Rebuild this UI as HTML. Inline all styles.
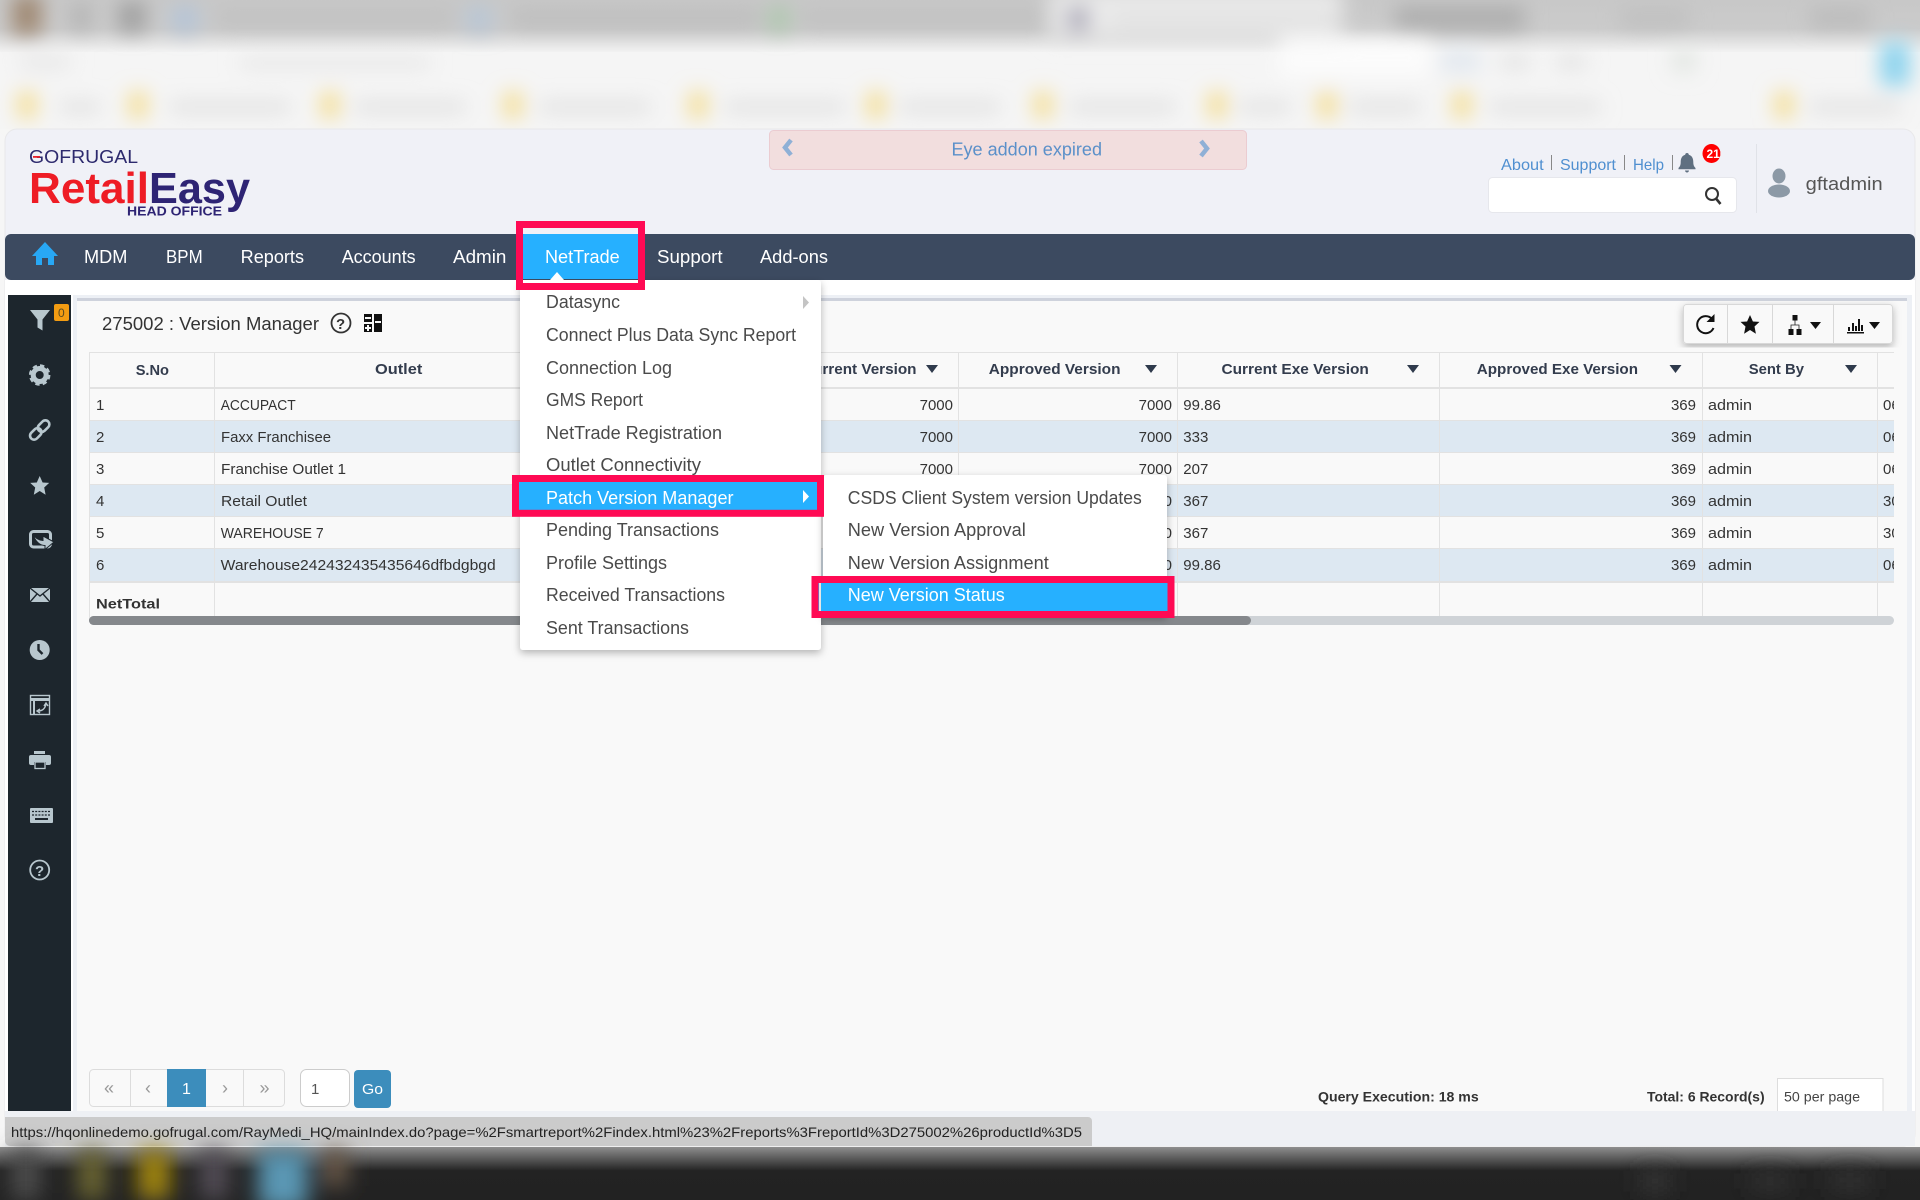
<!DOCTYPE html>
<html><head><meta charset="utf-8"><title>Version Manager</title>
<style>
html,body{margin:0;padding:0;background:#f6f6f6;width:1920px;height:1200px;overflow:hidden}
svg{display:block}
text{font-family:"Liberation Sans",sans-serif;white-space:pre}
.n{font-size:18px;fill:#fff}
.m{font-size:18px;fill:#4a4a4a}
.h{font-size:15px;font-weight:bold;fill:#333c4d}
.t{font-size:15px;fill:#333}
.i{fill:#b8c7ce}
.l{font-size:16px;fill:#4f8fd0}
.b{font-size:14px;font-weight:bold;fill:#333}
</style></head><body>
<svg xmlns="http://www.w3.org/2000/svg" width="1920" height="1200" viewBox="0 0 1920 1200">
<defs>
<filter id="bl" filterUnits="userSpaceOnUse" x="-40" y="-40" width="2000" height="200"><feGaussianBlur stdDeviation="10"/></filter>
<filter id="bs" filterUnits="userSpaceOnUse" x="-40" y="1120" width="2000" height="120"><feGaussianBlur stdDeviation="11"/></filter>
<filter id="sh" x="-10%" y="-10%" width="120%" height="120%"><feDropShadow dx="0" dy="3" stdDeviation="4" flood-color="#000" flood-opacity=".28"/></filter>
<linearGradient id="tb" x1="0" y1="0" x2="0" y2="1"><stop offset="0" stop-color="#8e8e8e"/><stop offset=".45" stop-color="#232323"/><stop offset="1" stop-color="#222"/></linearGradient>
<linearGradient id="tp" x1="0" y1="0" x2="0" y2="1"><stop offset="0" stop-color="#c8c8c8"/><stop offset=".55" stop-color="#cbcbcb"/><stop offset="1" stop-color="#f2f2f2"/></linearGradient>
<clipPath id="tc"><rect x="89" y="352" width="1805" height="273"/></clipPath>
<clipPath id="bd"><ellipse cx="1711.500" cy="153.500" rx="9" ry="9.500"/></clipPath>
</defs>

<!-- blurred browser chrome -->
<rect width="1920" height="129" fill="#f5f5f5"/>
<rect width="1920" height="52" fill="url(#tp)"/>
<g filter="url(#bl)">
<rect x="1050" y="-10" width="292" height="50" fill="#ebebeb"/>
<rect x="12" y="-5" width="30" height="40" fill="#a08a74"/>
<rect x="70" y="4" width="22" height="26" fill="#b4b4b4"/>
<rect x="118" y="2" width="28" height="30" fill="#a0a0a0"/>
<rect x="172" y="6" width="26" height="26" fill="#b4c4d8"/>
<rect x="215" y="10" width="240" height="16" fill="#bfbfbf"/>
<rect x="466" y="6" width="26" height="26" fill="#b8c6d6"/>
<rect x="510" y="10" width="250" height="16" fill="#bbb"/>
<rect x="768" y="6" width="22" height="26" fill="#aec8ae"/>
<rect x="800" y="10" width="250" height="16" fill="#bfbfbf"/>
<rect x="1066" y="6" width="24" height="26" fill="#b0aebc"/>
<rect x="1110" y="14" width="230" height="12" fill="#dedede"/>
<rect x="1395" y="6" width="130" height="24" fill="#adadad"/>
<rect x="1620" y="10" width="70" height="16" fill="#bebebe"/>
<rect x="1810" y="10" width="60" height="16" fill="#b8b8b8"/>
<rect x="20" y="54" width="50" height="16" fill="#e8e8e8"/>
<rect x="240" y="58" width="190" height="10" fill="#e4e4e4"/>
<rect x="1280" y="40" width="150" height="36" fill="#fcfcfc"/>
<rect x="1440" y="50" width="40" height="22" fill="#e2e8ef"/>
<rect x="1500" y="54" width="30" height="16" fill="#e4e4e4"/>
<rect x="1556" y="54" width="30" height="16" fill="#e4e4e4"/>
<rect x="1672" y="50" width="24" height="22" fill="#e2e6e2"/>
<rect x="1880" y="42" width="30" height="44" fill="#8fd4ee"/>
<g fill="#f4dd90">
<rect x="18" y="92" width="18" height="26"/><rect x="129" y="92" width="18" height="26"/><rect x="321" y="92" width="18" height="26"/><rect x="504" y="92" width="18" height="26"/><rect x="689" y="92" width="18" height="26"/><rect x="867" y="92" width="18" height="26"/><rect x="1034" y="92" width="18" height="26"/><rect x="1208" y="92" width="18" height="26"/><rect x="1318" y="92" width="18" height="26"/><rect x="1453" y="92" width="18" height="26"/><rect x="1775" y="92" width="18" height="26"/>
</g>
<g fill="#dcdcdc">
<rect x="60" y="102" width="40" height="10"/><rect x="170" y="102" width="120" height="10"/><rect x="355" y="102" width="110" height="10"/><rect x="540" y="102" width="110" height="10"/><rect x="725" y="102" width="120" height="10"/><rect x="900" y="102" width="100" height="10"/><rect x="1070" y="102" width="105" height="10"/><rect x="1240" y="102" width="50" height="10"/><rect x="1350" y="102" width="70" height="10"/><rect x="1490" y="102" width="110" height="10"/><rect x="1810" y="102" width="90" height="10"/>
</g>
</g>

<!-- app frame -->
<rect x="5" y="129" width="1910" height="1017" rx="12" fill="#f0f1f7" stroke="#e8e8ea"/>
<rect x="5" y="280" width="1910" height="831" fill="#fff"/>
<rect x="5" y="1111" width="1910" height="35" fill="#eef0f4"/>
<rect x="73" y="295" width="1839" height="816" fill="#edf0f5"/>
<rect x="77" y="298" width="1830" height="813" fill="#f9f9f9"/>
<rect x="77" y="298" width="1830" height="3" fill="#ced2dc"/>
<rect x="8" y="295" width="63" height="816" fill="#1d262d"/>

<!-- logo -->
<text x="29" y="163" font-size="18" fill="#2d2a6e" textLength="109" lengthAdjust="spacingAndGlyphs">GOFRUGAL</text>
<rect x="33" y="156" width="7" height="1.800" fill="#e8202a"/>
<text x="29" y="203" font-size="44" font-weight="bold" fill="#ee1c25" textLength="120" lengthAdjust="spacingAndGlyphs">Retail</text>
<text x="149" y="203" font-size="44" font-weight="bold" fill="#2e2474" textLength="101" lengthAdjust="spacingAndGlyphs">Easy</text>
<text x="127" y="215.700" font-size="13" font-weight="bold" fill="#2e2474" textLength="95" lengthAdjust="spacingAndGlyphs">HEAD OFFICE</text>

<!-- banner -->
<rect x="769.500" y="130.500" width="477" height="39" rx="4" fill="#f2dede" stroke="#ebccd1"/>
<path d="M791 140l-6 7.500 6 7.500" fill="none" stroke="#8fb0d6" stroke-width="4.500"/>
<path d="M1201 141l6 7.500-6 7.500" fill="none" stroke="#8fb0d6" stroke-width="4.500"/>
<text x="951.500" y="155.700" font-size="18" fill="#5b90c9" textLength="150.500" lengthAdjust="spacingAndGlyphs">Eye addon expired</text>

<!-- top links -->
<text class="l" x="1501" y="170" textLength="42.600" lengthAdjust="spacingAndGlyphs">About</text>
<rect x="1551" y="155" width="1" height="15" fill="#888"/>
<text class="l" x="1560" y="170" textLength="56" lengthAdjust="spacingAndGlyphs">Support</text>
<rect x="1624" y="155" width="1" height="15" fill="#888"/>
<text class="l" x="1633" y="170" textLength="31" lengthAdjust="spacingAndGlyphs">Help</text>
<rect x="1672" y="155" width="1" height="15" fill="#888"/>
<path d="M1687 153c1.200 0 1.800.8 1.800 1.800 3.500 1 4.500 4 4.500 7.500 0 3 1 4.700 2.200 5.700v1.300h-17v-1.300c1.200-1 2.200-2.700 2.200-5.700 0-3.500 1-6.500 4.500-7.500 0-1 .6-1.800 1.800-1.800zM1685 170.500h4c0 1-1 2-2 2s-2-1-2-2z" fill="#5f6f80"/>
<ellipse cx="1711.500" cy="153.500" rx="9" ry="9.500" fill="#f00"/>
<text x="1706.500" y="158" font-size="12" font-weight="bold" fill="#fff" textLength="20" lengthAdjust="spacingAndGlyphs" clip-path="url(#bd)">210</text>

<!-- search -->
<rect x="1488.500" y="177.500" width="248" height="35" rx="4" fill="#fff" stroke="#e6e7ec"/>
<circle cx="1712" cy="194" r="6" fill="none" stroke="#333" stroke-width="2"/>
<path d="M1716 198.500l4.500 5.500" stroke="#333" stroke-width="2.600" fill="none"/>

<!-- user -->
<rect x="1756" y="144" width="1" height="69" fill="#e0e2e8"/>
<ellipse cx="1779" cy="176" rx="6.500" ry="7.500" fill="#8c99a6"/>
<ellipse cx="1779" cy="191" rx="11" ry="6.500" fill="#8c99a6"/>
<text x="1805.700" y="190" font-size="18" fill="#555" textLength="77" lengthAdjust="spacingAndGlyphs">gftadmin</text>

<!-- nav -->
<path d="M11 234h1898a6 6 0 0 1 6 6v34a6 6 0 0 1-6 6H11a6 6 0 0 1-6-6v-34a6 6 0 0 1 6-6z" fill="#3c4a60"/>
<path d="M45 242l13 14h-4v9h-6v-7h-6v7h-6v-9h-4z" fill="#28a8f5"/>
<text class="n" x="84" y="263" textLength="43.400" lengthAdjust="spacingAndGlyphs">MDM</text>
<text class="n" x="166" y="263" textLength="36.700" lengthAdjust="spacingAndGlyphs">BPM</text>
<text class="n" x="240.700" y="263" textLength="63.300" lengthAdjust="spacingAndGlyphs">Reports</text>
<text class="n" x="341.700" y="263" textLength="74" lengthAdjust="spacingAndGlyphs">Accounts</text>
<text class="n" x="453" y="263" textLength="53.400" lengthAdjust="spacingAndGlyphs">Admin</text>
<text class="n" x="657" y="263" textLength="65.600" lengthAdjust="spacingAndGlyphs">Support</text>
<text class="n" x="760" y="263" textLength="68" lengthAdjust="spacingAndGlyphs">Add-ons</text>

<!-- title -->
<text x="102" y="330" font-size="18" fill="#333" textLength="217" lengthAdjust="spacingAndGlyphs">275002 : Version Manager</text>
<circle cx="341" cy="323" r="9.500" fill="none" stroke="#333" stroke-width="1.800"/>
<text x="336" y="329" font-size="15" font-weight="bold" fill="#333">?</text>
<g fill="#111"><rect x="364" y="314" width="8" height="8"/><rect x="364" y="324" width="8" height="8"/><rect x="374" y="314" width="8" height="18"/></g>
<g fill="#f9f9f9"><rect x="365" y="317" width="6" height="2"/><rect x="375" y="321" width="6" height="2"/><rect x="365" y="327" width="6" height="2"/><rect x="367" y="325" width="2" height="6"/></g>

<!-- toolbar -->
<rect x="1683.500" y="304.500" width="209" height="39" rx="3" fill="#f9f9f9" stroke="#d8d8d8" filter="url(#sh)"/>
<g fill="#d8d8d8"><rect x="1727" y="305" width="1" height="38"/><rect x="1772" y="305" width="1" height="38"/><rect x="1833" y="305" width="1" height="38"/></g>
<path d="M1712 319a8.500 8.500 0 1 0 1.500 9" fill="none" stroke="#111" stroke-width="2"/>
<path d="M1714.500 314v8h-8z" fill="#111"/>
<polygon transform="translate(1750 325)" points="0,-10 2.900,-3.500 9.500,-3.100 4.500,1.500 5.900,8.800 0,5 -5.900,8.800 -4.500,1.500 -9.500,-3.100 -2.900,-3.500" fill="#111"/>
<g fill="#111"><rect x="1792.500" y="315" width="5" height="5.500"/><rect x="1788.500" y="329" width="5" height="6"/><rect x="1796.500" y="329" width="5" height="6"/></g>
<path d="M1795 320.500v4.500M1791 329v-4h8v4" stroke="#222" stroke-width=".8" fill="none"/>
<path d="M1810 322h11l-5.500 7z" fill="#111"/>
<g fill="#111"><rect x="1847" y="332" width="17" height="1.500"/><rect x="1848" y="327" width="2" height="4"/><rect x="1852" y="323" width="2" height="8"/><rect x="1855" y="326" width="2" height="5"/><rect x="1858" y="319" width="2" height="12"/><rect x="1861" y="325" width="2" height="6"/></g>
<path d="M1869 322h11l-5.500 7z" fill="#111"/>

<!-- table -->
<g clip-path="url(#tc)">
<rect x="89" y="352" width="1805" height="35" fill="#f9f9f9"/>
<rect x="89" y="388" width="1805" height="32" fill="#f9f9f9"/>
<rect x="89" y="420" width="1805" height="32.500" fill="#dde8f2"/>
<rect x="89" y="452.500" width="1805" height="31.500" fill="#f9f9f9"/>
<rect x="89" y="484" width="1805" height="32.500" fill="#dde8f2"/>
<rect x="89" y="516.500" width="1805" height="31.500" fill="#f9f9f9"/>
<rect x="89" y="548" width="1805" height="33" fill="#dde8f2"/>
<g fill="#e2e2e2">
<rect x="89" y="352" width="1805" height="1"/><rect x="89" y="387" width="1805" height="2"/><rect x="89" y="420" width="1805" height="1"/><rect x="89" y="452" width="1805" height="1"/><rect x="89" y="484" width="1805" height="1"/><rect x="89" y="516" width="1805" height="1"/><rect x="89" y="548" width="1805" height="1"/><rect x="89" y="581" width="1805" height="2"/>
<rect x="89" y="352" width="1" height="270"/><rect x="214" y="352" width="1" height="270"/><rect x="958" y="352" width="1" height="270"/><rect x="1177" y="352" width="1" height="270"/><rect x="1439" y="352" width="1" height="270"/><rect x="1702" y="352" width="1" height="270"/><rect x="1877" y="352" width="1" height="270"/>
</g>
<text class="h" x="135.700" y="375" textLength="33.300" lengthAdjust="spacingAndGlyphs">S.No</text>
<text class="h" x="375" y="374" textLength="47.300" lengthAdjust="spacingAndGlyphs">Outlet</text>
<text class="h" x="802" y="374" textLength="114.500" lengthAdjust="spacingAndGlyphs">Current Version</text>
<text class="h" x="988.800" y="374" textLength="131.700" lengthAdjust="spacingAndGlyphs">Approved Version</text>
<text class="h" x="1221.500" y="374" textLength="147.300" lengthAdjust="spacingAndGlyphs">Current Exe Version</text>
<text class="h" x="1476.800" y="374" textLength="161.200" lengthAdjust="spacingAndGlyphs">Approved Exe Version</text>
<text class="h" x="1748.700" y="374" textLength="55.300" lengthAdjust="spacingAndGlyphs">Sent By</text>
<g fill="#2f3a4c"><path d="M926 365h12l-6 8z"/><path d="M1145 365h12l-6 8z"/><path d="M1407 365h12l-6 8z"/><path d="M1669.500 365h12l-6 8z"/><path d="M1845 365h12l-6 8z"/></g>

<text class="t" x="96" y="410">1</text><text class="t" x="96" y="442">2</text><text class="t" x="96" y="474">3</text><text class="t" x="96" y="506">4</text><text class="t" x="96" y="538">5</text><text class="t" x="96" y="570">6</text>
<text class="t" x="220.700" y="410" textLength="75" lengthAdjust="spacingAndGlyphs">ACCUPACT</text>
<text class="t" x="221" y="442" textLength="110" lengthAdjust="spacingAndGlyphs">Faxx Franchisee</text>
<text class="t" x="221" y="474" textLength="125" lengthAdjust="spacingAndGlyphs">Franchise Outlet 1</text>
<text class="t" x="221" y="506" textLength="86" lengthAdjust="spacingAndGlyphs">Retail Outlet</text>
<text class="t" x="220.700" y="538" textLength="103" lengthAdjust="spacingAndGlyphs">WAREHOUSE 7</text>
<text class="t" x="220.700" y="570" textLength="275" lengthAdjust="spacingAndGlyphs">Warehouse242432435435646dfbdgbgd</text>
<text class="b" x="96" y="608.500" font-size="15" textLength="64" lengthAdjust="spacingAndGlyphs">NetTotal</text>

<g class="t" font-size="15" fill="#333" text-anchor="end">
<text class="t" x="953" y="410">7000</text><text class="t" x="953" y="442">7000</text><text class="t" x="953" y="474">7000</text><text class="t" x="953" y="506">7000</text><text class="t" x="953" y="538">7000</text><text class="t" x="953" y="570">7000</text>
<text class="t" x="1172" y="410">7000</text><text class="t" x="1172" y="442">7000</text><text class="t" x="1172" y="474">7000</text><text class="t" x="1172" y="506">7000</text><text class="t" x="1172" y="538">7000</text><text class="t" x="1172" y="570">7000</text>
<text class="t" x="1696" y="410">369</text><text class="t" x="1696" y="442">369</text><text class="t" x="1696" y="474">369</text><text class="t" x="1696" y="506">369</text><text class="t" x="1696" y="538">369</text><text class="t" x="1696" y="570">369</text>
</g>
<text class="t" x="1183.300" y="410">99.86</text><text class="t" x="1183.300" y="442">333</text><text class="t" x="1183.300" y="474">207</text><text class="t" x="1183.300" y="506">367</text><text class="t" x="1183.300" y="538">367</text><text class="t" x="1183.300" y="570">99.86</text>
<text class="t" x="1708" y="410" textLength="44" lengthAdjust="spacingAndGlyphs">admin</text><text class="t" x="1708" y="442" textLength="44" lengthAdjust="spacingAndGlyphs">admin</text><text class="t" x="1708" y="474" textLength="44" lengthAdjust="spacingAndGlyphs">admin</text><text class="t" x="1708" y="506" textLength="44" lengthAdjust="spacingAndGlyphs">admin</text><text class="t" x="1708" y="538" textLength="44" lengthAdjust="spacingAndGlyphs">admin</text><text class="t" x="1708" y="570" textLength="44" lengthAdjust="spacingAndGlyphs">admin</text>
<text class="t" x="1883" y="410">06</text><text class="t" x="1883" y="442">06</text><text class="t" x="1883" y="474">06</text><text class="t" x="1883" y="506">30</text><text class="t" x="1883" y="538">30</text><text class="t" x="1883" y="570">06</text>
</g>
<rect x="89" y="616" width="1805" height="9" rx="4.500" fill="#cfd3d7"/>
<rect x="89" y="616" width="1162" height="9" rx="4.500" fill="#85888c"/>

<!-- sidebar icons -->
<g class="i">
<path d="M30 310h20l-7.500 9.500v11l-5-3v-8z"/>
<rect x="54" y="304" width="15" height="17" rx="2" fill="#f39c12"/>
<text x="58" y="317" font-size="12" fill="#5a4a20">0</text>
<g transform="translate(39.700 375)"><circle r="6.500" fill="none" stroke="#b8c7ce" stroke-width="5"/><circle r="9" fill="none" stroke="#b8c7ce" stroke-width="3.500" stroke-dasharray="4.100 2.970" /></g>
<g transform="translate(39.700 430) rotate(-45)" fill="none" stroke="#b8c7ce" stroke-width="2.600"><rect x="-12" y="-4" width="13" height="8" rx="4"/><rect x="-1" y="-4" width="13" height="8" rx="4"/></g>
<polygon transform="translate(39.700 486)" points="0,-10 2.900,-3.500 9.500,-3.100 4.500,1.500 5.900,8.800 0,5 -5.900,8.800 -4.500,1.500 -9.500,-3.100 -2.900,-3.500"/>
<rect x="30.500" y="531.500" width="20" height="15.500" rx="3" fill="none" stroke="#b8c7ce" stroke-width="3"/>
<path d="M33 534c2 4 5 6 10 6.500V536l11 6-9 7.500v-4c-5 0-10-4-12-11.500z" stroke="#1d262d" stroke-width="1"/>
<rect x="30" y="588" width="20" height="14" fill="#b8c7ce"/>
<path d="M30 588l10 8 10-8M30 602l7-8M50 602l-7-8" fill="none" stroke="#1d262d" stroke-width="1.400"/>
<circle cx="39.700" cy="650" r="10"/>
<path d="M38.500 644v6l4 4" fill="none" stroke="#1d262d" stroke-width="2.400"/>
<rect x="30.500" y="695.500" width="19" height="19" fill="none" stroke="#b8c7ce" stroke-width="1.400"/>
<rect x="31" y="698" width="18" height="3"/><rect x="33" y="698" width="2" height="16"/>
<path d="M38 711c4 0 7-2 8-7M44 706l2-3 2 3M40 709l-3 2 3 2" fill="none" stroke="#b8c7ce" stroke-width="1.400"/>
<rect x="34" y="751" width="11" height="3"/>
<path d="M31 755h18a2 2 0 0 1 2 2v6a2 2 0 0 1-2 2h-3v-3H34v3h-3a2 2 0 0 1-2-2v-6a2 2 0 0 1 2-2z"/>
<rect x="35" y="762" width="10" height="6.500" fill="#1d262d" stroke="#b8c7ce" stroke-width="1.300"/>
<rect x="30" y="808" width="23" height="15" rx="1"/>
<path d="M32 811.500h19M32 815h19" stroke="#1d262d" stroke-width="1.300" stroke-dasharray="2 1.200" fill="none"/>
<rect x="35" y="818" width="13" height="2" fill="#1d262d"/>
<circle cx="39.700" cy="870" r="9.500" fill="none" stroke="#b8c7ce" stroke-width="1.800"/>
<text x="35" y="876" font-size="15" font-weight="bold">?</text>
</g>

<!-- dropdown -->
<rect x="520" y="280" width="301" height="370" rx="3" fill="#fff" filter="url(#sh)"/>
<path d="M803 296l6 6.500-6 6.500z" fill="#c4c4c4"/>
<text class="m" x="546" y="308" textLength="74" lengthAdjust="spacingAndGlyphs">Datasync</text>
<text class="m" x="546" y="341" textLength="250" lengthAdjust="spacingAndGlyphs">Connect Plus Data Sync Report</text>
<text class="m" x="546" y="374" textLength="126" lengthAdjust="spacingAndGlyphs">Connection Log</text>
<text class="m" x="546" y="406" textLength="97" lengthAdjust="spacingAndGlyphs">GMS Report</text>
<text class="m" x="546" y="439" textLength="176" lengthAdjust="spacingAndGlyphs">NetTrade Registration</text>
<text class="m" x="546" y="471" textLength="155" lengthAdjust="spacingAndGlyphs">Outlet Connectivity</text>
<text class="m" x="546" y="536" textLength="173" lengthAdjust="spacingAndGlyphs">Pending Transactions</text>
<text class="m" x="546" y="569" textLength="121" lengthAdjust="spacingAndGlyphs">Profile Settings</text>
<text class="m" x="546" y="601" textLength="179" lengthAdjust="spacingAndGlyphs">Received Transactions</text>
<text class="m" x="546" y="634" textLength="143" lengthAdjust="spacingAndGlyphs">Sent Transactions</text>

<!-- submenu -->
<rect x="823" y="475" width="344" height="141" rx="3" fill="#fff" filter="url(#sh)"/>
<text class="m" x="847.800" y="504" textLength="294" lengthAdjust="spacingAndGlyphs">CSDS Client System version Updates</text>
<text class="m" x="847.800" y="536" textLength="178" lengthAdjust="spacingAndGlyphs">New Version Approval</text>
<text class="m" x="847.800" y="569" textLength="201" lengthAdjust="spacingAndGlyphs">New Version Assignment</text>

<!-- highlight: Patch -->
<rect x="515.500" y="478.500" width="305" height="34.800" fill="#26b0ff" stroke="#ff0a54" stroke-width="7"/>
<text class="n" x="546" y="504" textLength="187.500" lengthAdjust="spacingAndGlyphs">Patch Version Manager</text>
<path d="M803 490l6 6.500-6 6.500z" fill="#fff"/>
<!-- highlight: New Version Status -->
<rect x="815" y="579.500" width="356" height="35" fill="#26b0ff" stroke="#ff0a54" stroke-width="7"/>
<rect x="819" y="583" width="2" height="28" fill="#e6e6e6"/>
<text class="n" x="847.800" y="601" textLength="157" lengthAdjust="spacingAndGlyphs">New Version Status</text>

<!-- highlight: NetTrade -->
<rect x="516" y="221" width="129" height="69" fill="#ff0a54"/>
<rect x="523" y="228" width="115" height="55" fill="#f0f1f7"/>
<rect x="523" y="234" width="115" height="45" fill="#26b0ff"/>
<rect x="523" y="279" width="115" height="1" fill="#3c4a60"/>
<rect x="523" y="280" width="115" height="3" fill="#fff"/>
<path d="M550 280l7-8 7 8z" fill="#fff"/>
<text class="n" x="545" y="263" textLength="74.700" lengthAdjust="spacingAndGlyphs">NetTrade</text>

<!-- pagination -->
<rect x="89.500" y="1069.500" width="195" height="37" rx="4" fill="#f9f9f9" stroke="#dcdcdc"/>
<g fill="#dcdcdc"><rect x="130" y="1070" width="1" height="36"/><rect x="243" y="1070" width="1" height="36"/></g>
<rect x="167" y="1069" width="39" height="38" fill="#3c8dbc"/>
<text x="104" y="1094" font-size="18" fill="#999">«</text>
<text x="145" y="1094" font-size="18" fill="#999">‹</text>
<text x="182" y="1094" font-size="16" fill="#fff">1</text>
<text x="222" y="1094" font-size="18" fill="#999">›</text>
<text x="259.500" y="1094" font-size="18" fill="#999">»</text>
<rect x="300.500" y="1069.500" width="49" height="37" rx="6" fill="#fff" stroke="#ccc"/>
<text x="311" y="1094" font-size="15" fill="#555">1</text>
<rect x="354" y="1070" width="37" height="38" rx="4" fill="#3c8dbc"/>
<text x="362" y="1094" font-size="15" fill="#fff" textLength="21" lengthAdjust="spacingAndGlyphs">Go</text>

<!-- footer -->
<text class="b" x="1318" y="1101.700" textLength="160.700" lengthAdjust="spacingAndGlyphs">Query Execution: 18 ms</text>
<text class="b" x="1647" y="1101.700" textLength="117.600" lengthAdjust="spacingAndGlyphs">Total: 6 Record(s)</text>
<path d="M1777.500 1111v-32.500h105.500v32.500" fill="#fff" stroke="#ddd"/>
<text x="1784" y="1101.700" font-size="14" fill="#444" textLength="76" lengthAdjust="spacingAndGlyphs">50 per page</text>

<!-- status bar -->
<path d="M5 1117h1083a4 4 0 0 1 4 4v25H10a5 5 0 0 1-5-5z" fill="#cbcbcb"/>
<text x="11" y="1137" font-size="14" fill="#222" textLength="1071" lengthAdjust="spacingAndGlyphs">https://hqonlinedemo.gofrugal.com/RayMedi_HQ/mainIndex.do?page=%2Fsmartreport%2Findex.html%23%2Freports%3FreportId%3D275002%26productId%3D5</text>

<!-- taskbar -->
<rect x="0" y="1147" width="1920" height="53" fill="url(#tb)"/>
<g filter="url(#bs)">
<rect x="12" y="1150" width="28" height="50" fill="#4e4e4e"/>
<rect x="78" y="1150" width="28" height="50" fill="#6a6530"/>
<rect x="138" y="1150" width="32" height="50" fill="#a08510"/>
<rect x="200" y="1150" width="28" height="50" fill="#524e56"/>
<rect x="258" y="1150" width="50" height="60" fill="#5a97b4"/>
<rect x="322" y="1150" width="26" height="36" fill="#6a5a4a"/>
<rect x="1640" y="1170" width="30" height="22" fill="#363636"/>
<rect x="1750" y="1172" width="40" height="18" fill="#303030"/>
<rect x="1830" y="1170" width="40" height="20" fill="#333"/>
</g>
<g filter="url(#bl)"></g>
</svg>
</body></html>
